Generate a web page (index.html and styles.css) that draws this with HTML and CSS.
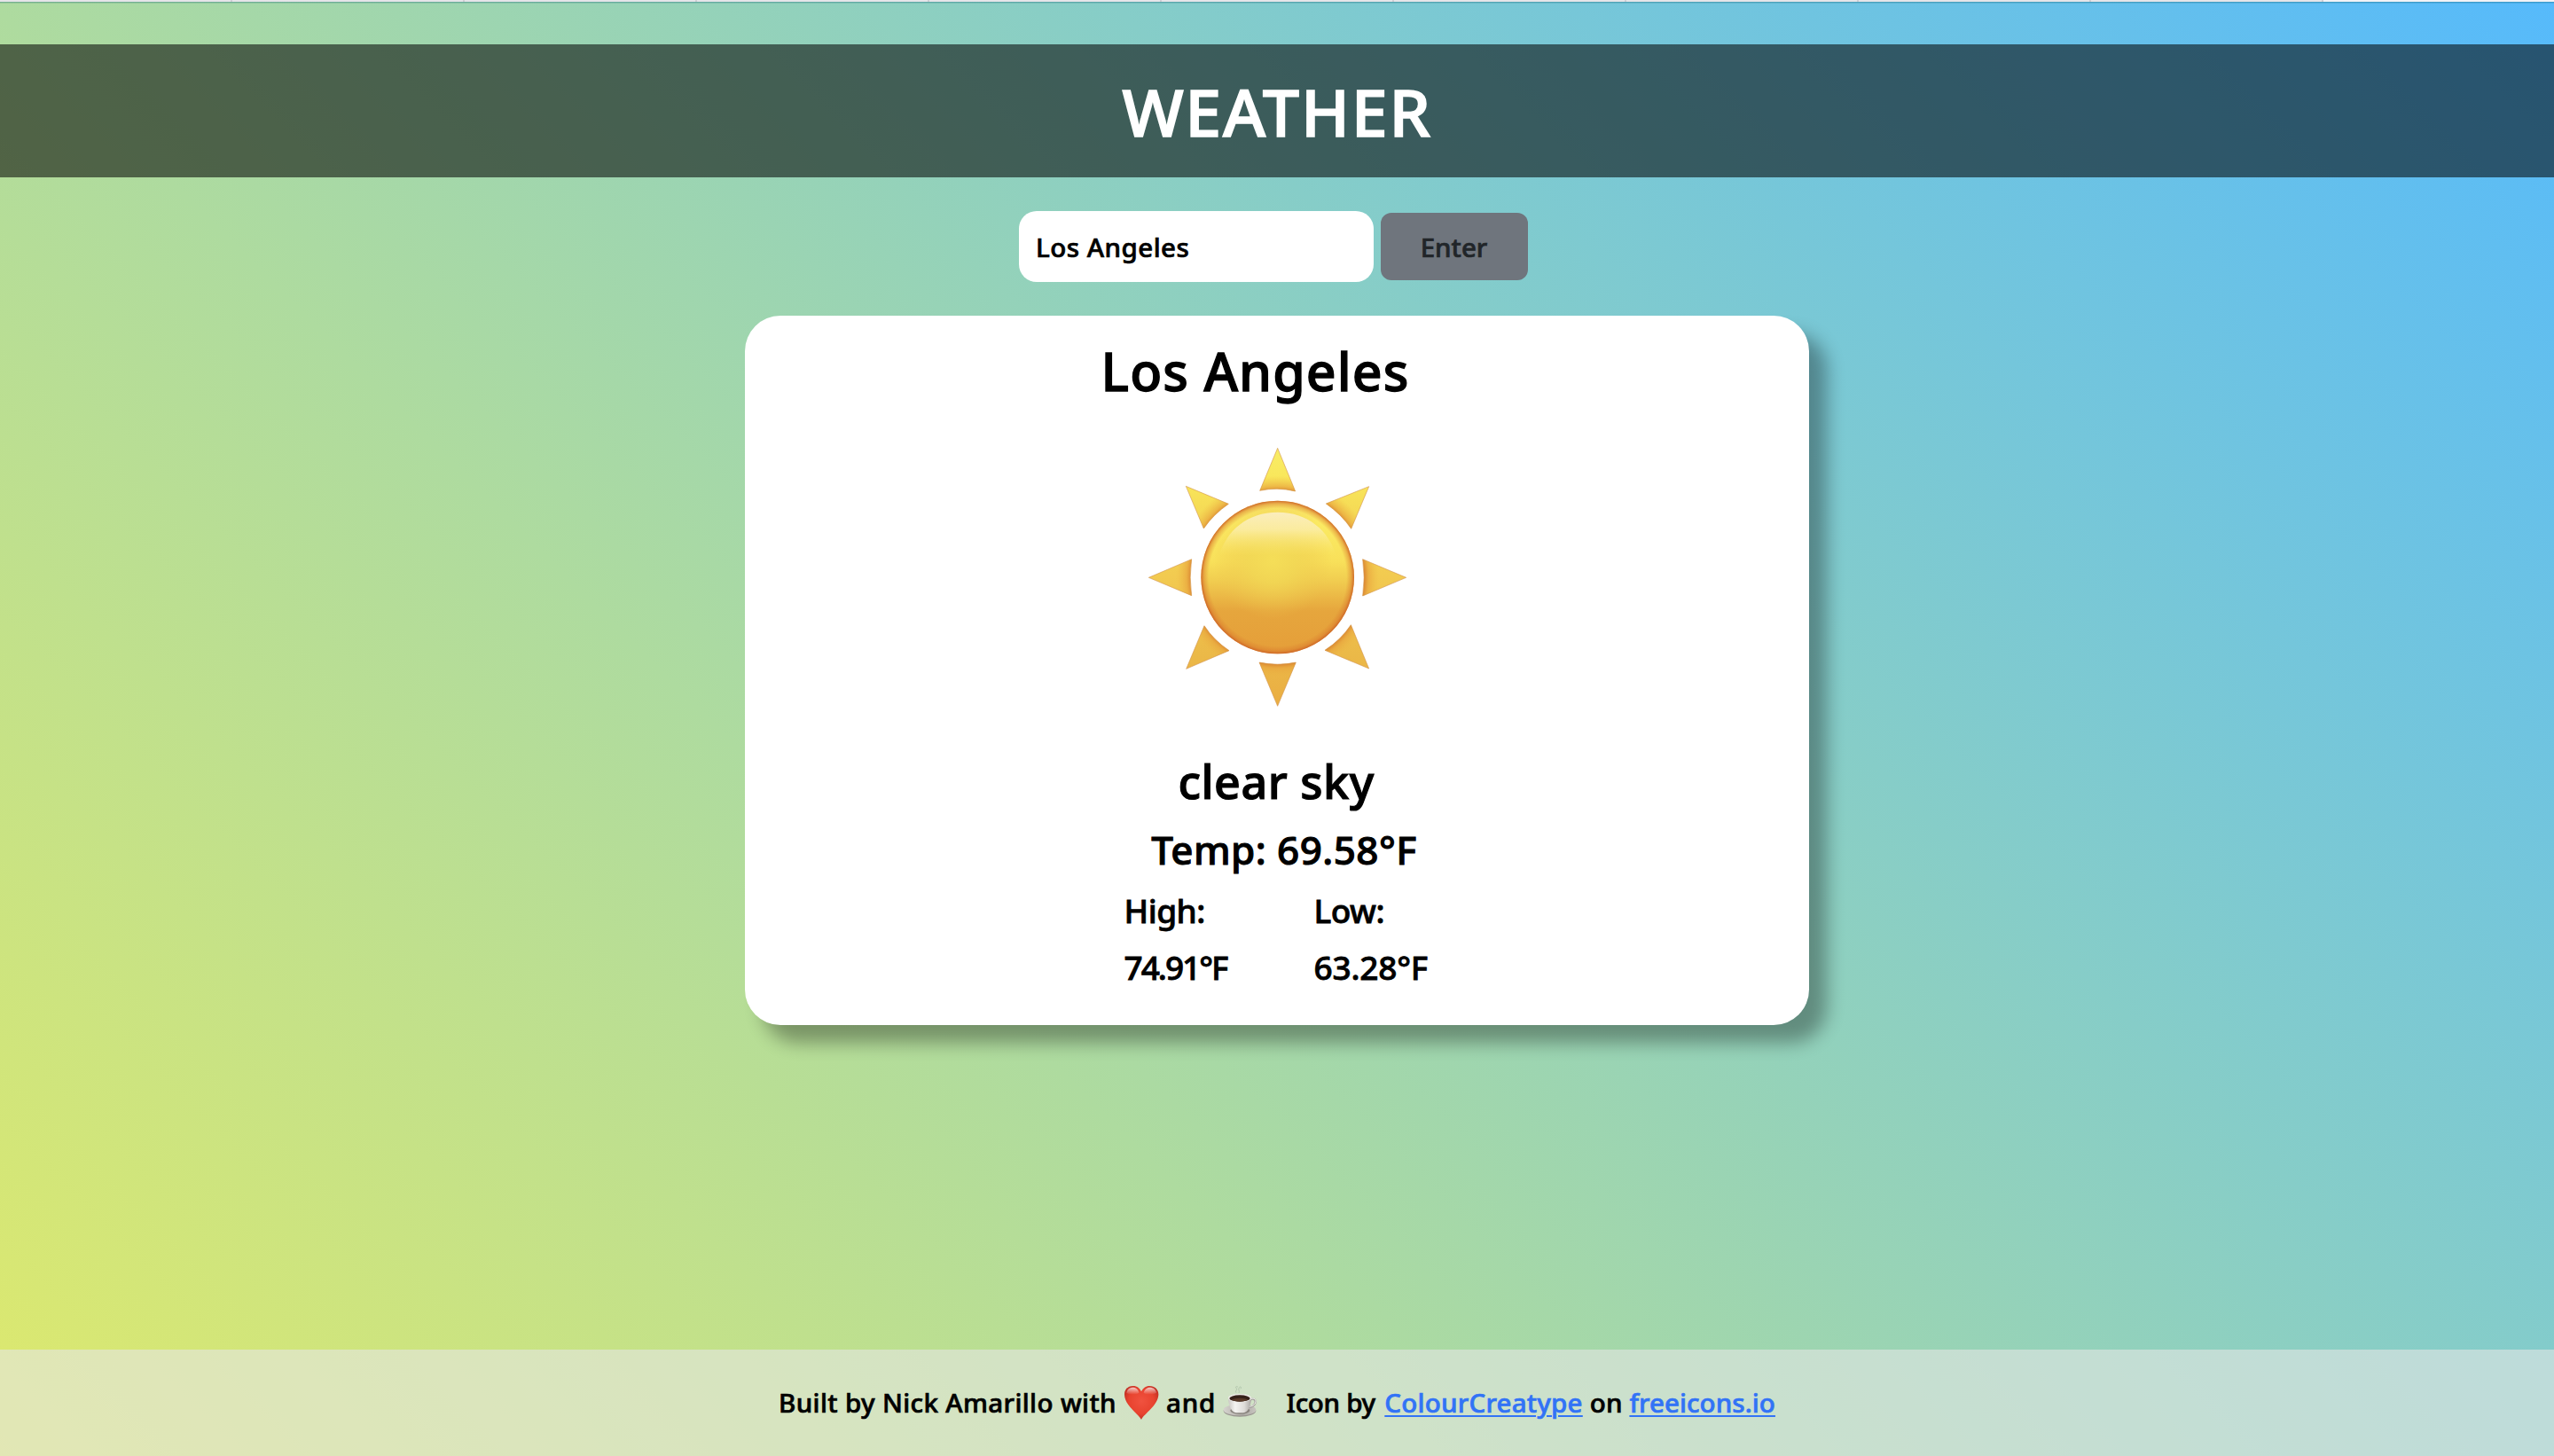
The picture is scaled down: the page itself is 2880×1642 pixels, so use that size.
FILE: index.html
```html
<!DOCTYPE html>
<html lang="en">
<head>
<meta charset="utf-8">
<title>Weather</title>
<link rel="stylesheet" href="styles.css">
</head>
<body>
<div class="tabstrip"></div>
<header class="header"><h1 class="title">WEATHER</h1></header>
<main class="main">
  <form class="search">
    <input class="search-input" type="text" value="Los Angeles">
    <button class="search-button" type="button">Enter</button>
  </form>
  <section class="card">
    <h2 class="city">Los Angeles</h2>
    <svg class="sun" viewBox="120 33 960 960">
      <defs>
        <linearGradient id="disc" x1="0" y1="0" x2="0" y2="1">
          <stop offset="0" stop-color="#f7e067"/><stop offset=".15" stop-color="#fbea62"/><stop offset=".4" stop-color="#f8e05a"/><stop offset=".52" stop-color="#f1cd50"/><stop offset=".72" stop-color="#e6a63d"/><stop offset="1" stop-color="#e59e39"/>
        </linearGradient>
        <radialGradient id="glow" gradientUnits="userSpaceOnUse" cx="585" cy="455" r="200">
          <stop offset="0" stop-color="#f5de58"/><stop offset=".4" stop-color="#f1d654" stop-opacity=".8"/><stop offset="1" stop-color="#edc44c" stop-opacity="0"/>
        </radialGradient>
        <linearGradient id="shine" x1="0" y1="0" x2="0" y2="1">
          <stop offset="0" stop-color="#fbedbd"/><stop offset=".4" stop-color="#fbeda6" stop-opacity=".9"/><stop offset="1" stop-color="#fae76b" stop-opacity="0"/>
        </linearGradient>
        <radialGradient id="rim">
          <stop offset=".9" stop-color="#d9772c" stop-opacity="0"/><stop offset=".96" stop-color="#d9772c" stop-opacity=".45"/><stop offset="1" stop-color="#cd6428" stop-opacity=".95"/>
        </radialGradient>
        <radialGradient id="rays" gradientUnits="userSpaceOnUse" cx="602" cy="513" r="440">
          <stop offset=".66" stop-color="#d77e2e"/><stop offset=".7" stop-color="#e8a33d" stop-opacity=".65"/><stop offset=".78" stop-color="#efb945" stop-opacity="0"/>
        </radialGradient>
        <linearGradient id="raybase" gradientUnits="userSpaceOnUse" x1="0" y1="75" x2="0" y2="950">
          <stop offset="0" stop-color="#f8ec66"/><stop offset=".12" stop-color="#f9e75b"/><stop offset=".25" stop-color="#f5da55"/><stop offset=".5" stop-color="#f2ca50"/><stop offset=".8" stop-color="#ebb948"/><stop offset="1" stop-color="#eaad42"/>
        </linearGradient>
        <path id="rayset" d="M602 76L662 222Q602 207 542 220ZM911 206L851 349Q819 301 766 264ZM1037 514L890 576Q899 514 890 452ZM911 822L762 760Q817 724 850 674ZM602 949L540 801Q602 814 664 801ZM293 823L354 677Q385 725 438 761ZM166 514L311 452Q302 514 311 575ZM292 205L436 265Q386 299 352 348Z"/>
      </defs>
      <use href="#rayset" fill="url(#raybase)"/>
      <use href="#rayset" fill="url(#rays)" stroke="#d2924f" stroke-width="3" stroke-opacity=".6"/>
      <circle cx="602" cy="513" r="259" fill="url(#disc)"/>
      <circle cx="585" cy="455" r="200" fill="url(#glow)"/>
      <path d="M602 293C705 293 775 355 800 440H404C429 355 499 293 602 293Z" fill="url(#shine)"/>
      <circle cx="602" cy="513" r="259" fill="url(#rim)"/>
    </svg>
    <p class="condition">clear sky</p>
    <p class="temp">Temp: 69.58°F</p>
    <div class="range">
      <div class="range-col"><p>High:</p><p class="high">74.91°F</p></div>
      <div class="range-col"><p>Low:</p><p class="low">63.28°F</p></div>
    </div>
  </section>
</main>
<footer class="footer">
  <span class="built">Built by Nick Amarillo with</span>
  <svg class="emoji heart" viewBox="48 38 120 120">
    <defs>
      <radialGradient id="heartfill" cx=".5" cy=".45" r=".62"><stop offset="0" stop-color="#f0523f"/><stop offset=".6" stop-color="#e8432f"/><stop offset="1" stop-color="#b52a20"/></radialGradient>
      <linearGradient id="heartshine" x1="0" y1="0" x2="0" y2="1"><stop offset="0" stop-color="#fff" stop-opacity=".75"/><stop offset="1" stop-color="#fff" stop-opacity="0"/></linearGradient>
    </defs>
    <path d="M108 155C98 134 52 108 51 71C50 52 64 41 80 41C94 41 103 49 108 60C113 49 123 41 136 41C153 41 167 53 166 71C164 108 118 134 108 155Z" fill="url(#heartfill)"/>
    <path d="M58 64C60 52 69 46 80 46C91 46 98 53 100 64C88 72 70 72 58 64ZM116 64C119 53 126 46 137 46C148 46 157 52 159 64C146 72 128 72 116 64Z" fill="url(#heartshine)"/>
  </svg>
  <span class="and">and</span>
  <svg class="emoji coffee" viewBox="380 36 120 120">
    <defs>
      <linearGradient id="cup" x1="0" y1="0" x2="1" y2="0"><stop offset="0" stop-color="#c9c6c2"/><stop offset=".3" stop-color="#f5f4f2"/><stop offset=".7" stop-color="#dedbd8"/><stop offset="1" stop-color="#aaa6a2"/></linearGradient>
      <linearGradient id="saucer" x1="0" y1="0" x2="1" y2="0"><stop offset="0" stop-color="#d6d3cf"/><stop offset=".6" stop-color="#aca8a3"/><stop offset="1" stop-color="#c8c5c0"/></linearGradient>
    </defs>
    <ellipse cx="440" cy="123" rx="55" ry="20" fill="#99958f"/>
    <ellipse cx="440" cy="120" rx="55" ry="19" fill="url(#saucer)"/>
    <ellipse cx="441" cy="122" rx="33" ry="12" fill="#88837d"/>
    <path d="M475 86C484 80 494 84 493 94C492 105 480 111 470 111" fill="none" stroke="#a5a19d" stroke-width="7"/>
    <path d="M475 84C484 78 495 82 494 92C493 103 480 109 470 109" fill="none" stroke="#efeeec" stroke-width="3"/>
    <path d="M401 80C402 106 412 128 428 130H452C468 128 478 106 479 80Z" fill="url(#cup)"/>
    <ellipse cx="440" cy="80" rx="39" ry="14" fill="#eeece9"/>
    <ellipse cx="440" cy="81" rx="35" ry="11" fill="#352119"/>
    <path d="M412 86C425 93 455 93 468 86C459 78 422 78 412 86Z" fill="#593a29"/>
    <path d="M428 62C423 54 434 53 428 46C424 41 430 39 434 43M437 63C441 55 433 52 438 45C442 38 447 44 443 49" fill="none" stroke="#9caf99" stroke-width="2.5" stroke-opacity=".65"/>
  </svg>
  <span class="icon-by">Icon by</span>
  <a class="link author" href="#">ColourCreatype</a>
  <span class="on">on</span>
  <a class="link site" href="#">freeicons.io</a>
</footer>
</body>
</html>
```
FILE: styles.css
```css
* { box-sizing: border-box; }
body {
  margin: 0;
  min-height: 1642px;
  display: flex;
  flex-direction: column;
  overflow: hidden;
  background: linear-gradient(45deg, #dee96d, #aedb9f 36%, #86cdc8 64%, #56bafb);
  font-family: "Noto Sans", sans-serif;
  font-weight: 500;
  color: #000;
  -webkit-text-stroke: .7px currentColor;
}
h1, h2, p { margin: 0; font-weight: 500; }
.tabstrip {
  height: 4px;
  margin-bottom: 46px;
  border-bottom: 1px solid rgba(0, 80, 90, .13);
  background:
    linear-gradient(rgba(0, 90, 110, .32), rgba(0, 90, 110, .32)) 0 2px / 100% 1px no-repeat,
    linear-gradient(#f2f3f7, #f2f3f7) 2620px 0 / 260px 2px no-repeat,
    repeating-linear-gradient(90deg, #e6e5e9 0 260px, #cfced4 260px 262px) 0 0 / 100% 2px no-repeat;
}
.header {
  height: 150px;
  background: rgba(0, 0, 0, .55);
  text-align: center;
}
.title {
  font-size: 73.5px;
  line-height: 151px;
  letter-spacing: 1.78px;
  color: #fff;
  -webkit-text-stroke-width: 1.6px;
}
.main {
  flex: 1;
  display: flex;
  flex-direction: column;
  align-items: center;
}
.search {
  display: flex;
  align-items: center;
  gap: 8px;
  margin: 38px 8px 38px 0;
}
.search-input, .search-button {
  font: 500 29.5px "Noto Sans", sans-serif;
  border: 0;
  -webkit-text-stroke: .7px currentColor;
}
.search-input {
  width: 400px;
  height: 80px;
  padding: 0 19px;
  border-radius: 20px;
  background: #fff;
  color: #000;
  letter-spacing: .48px;
}
.search-button {
  width: 166px;
  height: 76px;
  padding: 0 1px 0 0;
  border-radius: 12px;
  background: #6f757d;
  color: #212529;
}
.card {
  width: 1200px;
  height: 800px;
  padding-top: 14px;
  display: flex;
  flex-direction: column;
  align-items: center;
  border-radius: 40px;
  background: #fff;
  box-shadow: 20px 20px 20px rgba(0, 0, 0, .33);
}
.city {
  padding-right: 49px;
  font-size: 59px;
  line-height: 96px;
  letter-spacing: 1.06px;
  -webkit-text-stroke-width: 1.3px;
}
.sun {
  width: 320px;
  height: 320px;
  margin: 25px 0 28px;
}
.condition {
  padding-right: 2px;
  font-size: 52px;
  line-height: 83px;
  letter-spacing: .53px;
  -webkit-text-stroke-width: 1.2px;
}
.temp {
  padding-left: 16px;
  font-size: 44px;
  line-height: 73px;
  letter-spacing: .44px;
  -webkit-text-stroke-width: 1px;
}
.range {
  display: flex;
  width: 345px;
  font-size: 37px;
  line-height: 64px;
  letter-spacing: -.5px;
  -webkit-text-stroke-width: .8px;
}
.range-col { width: 214px; flex: none; }
.high { letter-spacing: -2px; }
.low { letter-spacing: -.2px; }
.footer {
  height: 120px;
  display: flex;
  align-items: center;
  justify-content: center;
  background: rgba(228, 230, 228, .6);
  font-size: 29.5px;
  line-height: 40px;
  white-space: nowrap;
}
.built { letter-spacing: .37px; }
.emoji { width: 40px; height: 40px; flex: none; }
.heart { margin: 0 8px; }
.and { letter-spacing: .8px; }
.coffee { margin: 0 33px 0 6.5px; }
.icon-by { letter-spacing: -.3px; }
.link {
  color: #3273f6;
  text-decoration: underline;
  text-decoration-thickness: 2px;
  text-underline-offset: 3px;
}
.author { margin: 0 8px 0 10.5px; letter-spacing: .23px; }
.on { letter-spacing: .28px; }
.site { margin-left: 7.5px; letter-spacing: .08px; }
```
